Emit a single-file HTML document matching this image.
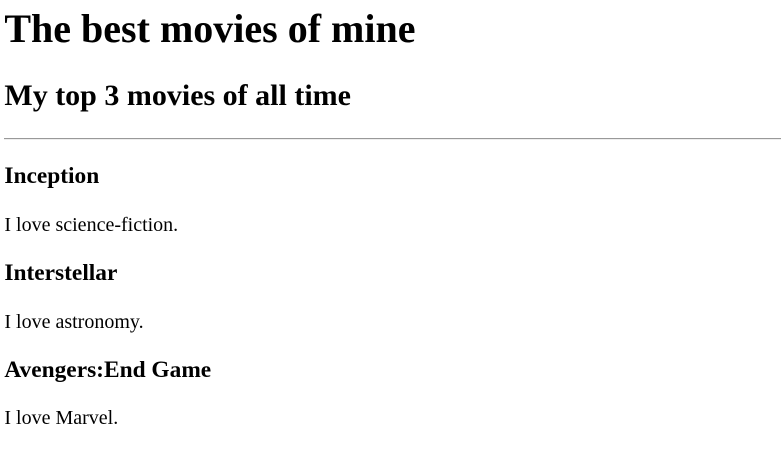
<!DOCTYPE html>
<html><head><meta charset="utf-8"><style>
html{zoom:1.25}
body{margin:0 0 0 3.5px;font-family:"Liberation Serif",serif;color:#000;background:#fff}
h1{font-size:32px;margin:4.2px 0 21.44px}
h2{font-size:24px;margin:19.92px 0}
h3{font-size:18.72px;margin:18.72px 0}
p{font-size:16px;margin:16px 0}
hr{margin:8px 0;border:0;border-top:1px solid #999;border-bottom:1px solid #eee}
</style></head><body>
<h1>The best movies of mine</h1>
<h2>My top 3 movies of all time</h2>
<hr>
<h3>Inception</h3>
<p>I love science-fiction.</p>
<h3>Interstellar</h3>
<p>I love astronomy.</p>
<h3>Avengers:End Game</h3>
<p>I love Marvel.</p>
</body></html>
